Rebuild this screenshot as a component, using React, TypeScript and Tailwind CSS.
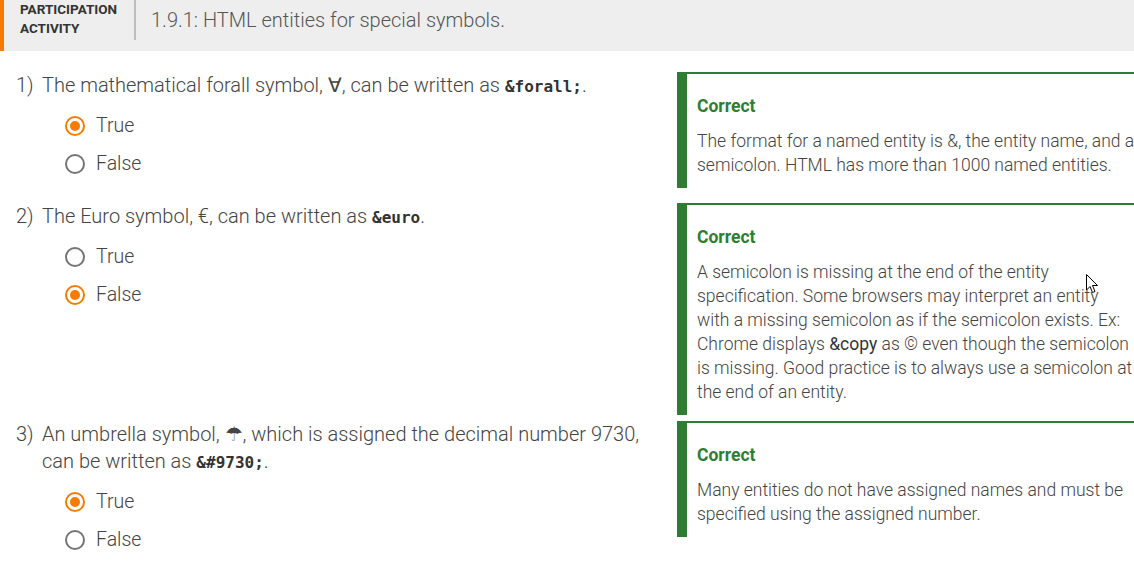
import React from 'react';

type Opt = { label: string; selected: boolean };

function Radio({ selected }: { selected: boolean }) {
    return (
        <span
            className={
                'flex h-[20px] w-[20px] shrink-0 items-center justify-center rounded-full border-2 ' +
                (selected ? 'border-[#f57c00]' : 'border-[#757575]')
            }
        >
            {selected && <span className="h-[10px] w-[10px] rounded-full bg-[#f57c00]" />}
        </span>
    );
}

function Options({ options }: { options: Opt[] }) {
    return (
        <div className="pt-[7px]">
            {options.map((o) => (
                <div key={o.label} className="flex h-[38px] items-center pl-[49px]">
                    <Radio selected={o.selected} />
                    <span className="ml-[11px] text-[19.5px] font-light text-[#444]">{o.label}</span>
                </div>
            ))}
        </div>
    );
}

function Code({ children }: { children: React.ReactNode }) {
    return <code className="font-['DejaVu_Sans_Mono',monospace] text-[16px] font-bold text-[#333]">{children}</code>;
}

function Feedback({ children }: { children: React.ReactNode }) {
    return (
        <div className="w-[470px] shrink-0 border-t-2 border-l-[10px] border-[#2e7d32] bg-white pt-[20px] pr-[20px] pb-[11px] pl-[10px]">
            <div className="text-[17.5px] leading-[24px] font-bold text-[#2e7d32]">Correct</div>
            <p className="mt-[11px] w-[440px] text-[17.5px] leading-[24px] font-light text-[#444]">{children}</p>
        </div>
    );
}

function Question({ num, children, options }: { num: string; children: React.ReactNode; options: Opt[] }) {
    return (
        <div className="w-[677px] shrink-0 pl-4">
            <div className="flex text-[20px] leading-[27px] font-light text-[#444]">
                <span className="w-[26px] shrink-0">{num}</span>
                <span>{children}</span>
            </div>
            <Options options={options} />
        </div>
    );
}

export default function App() {
    return (
        <div className="relative h-[568px] w-[1134px] overflow-hidden bg-white font-['Roboto',sans-serif]">
            <div className="flex h-[51px] bg-[#eeeeee]">
                <div className="w-[4px] bg-[#f57c00]" />
                <div className="w-[130px] pl-[16px] text-[13.5px] leading-[19px] font-bold text-[#333]">
                    PARTICIPATION
                    <br />
                    ACTIVITY
                </div>
                <div className="h-[40px] w-[2px] bg-[#bdbdbd]" />
                <div className="pl-[15px] pt-[8px] text-[20px] leading-[24px] font-light text-[#555]">
                    1.9.1: HTML entities for special symbols.
                </div>
            </div>

            <div className="mt-[21px] mb-[15px] flex items-start">
                <Question
                    num="1)"
                    options={[
                        { label: 'True', selected: true },
                        { label: 'False', selected: false },
                    ]}
                >
                    The mathematical forall symbol, ∀, can be written as <Code>&amp;forall;</Code>.
                </Question>
                <Feedback>
                    The format for a named entity is &amp;, the entity name, and a semicolon. HTML has more than 1000
                    named entities.
                </Feedback>
            </div>

            <div className="mb-[6px] flex items-start">
                <Question
                    num="2)"
                    options={[
                        { label: 'True', selected: false },
                        { label: 'False', selected: true },
                    ]}
                >
                    The Euro symbol, €, can be written as <Code>&amp;euro</Code>.
                </Question>
                <Feedback>
                    A semicolon is missing at the end of the entity specification. Some browsers may interpret an
                    entity
                    <br />
                    with a missing semicolon as if the semicolon exists. Ex: Chrome displays{' '}
                    <span className="font-normal text-[#333]">&amp;copy</span> as © even though the semicolon is
                    missing. Good practice is to always use a semicolon at the end of an entity.
                </Feedback>
            </div>

            <div className="flex items-start">
                <Question
                    num="3)"
                    options={[
                        { label: 'True', selected: true },
                        { label: 'False', selected: false },
                    ]}
                >
                    An umbrella symbol, ☂, which is assigned the decimal number 9730,
                    <br />
                    can be written as <Code>&amp;#9730;</Code>.
                </Question>
                <Feedback>
                    Many entities do not have assigned names and must be specified using the assigned number.
                </Feedback>
            </div>

            {/* mouse pointer */}
            <svg className="absolute left-[1086px] top-[274px]" width="13" height="21" viewBox="0 0 13 21">
                <path d="M0.5 0.5 L0.5 16 L4 12.5 L6.5 18.5 L9 17.5 L6.5 11.5 L11.5 11.5 Z" fill="white" stroke="black" strokeWidth="1" />
            </svg>
        </div>
    );
}
